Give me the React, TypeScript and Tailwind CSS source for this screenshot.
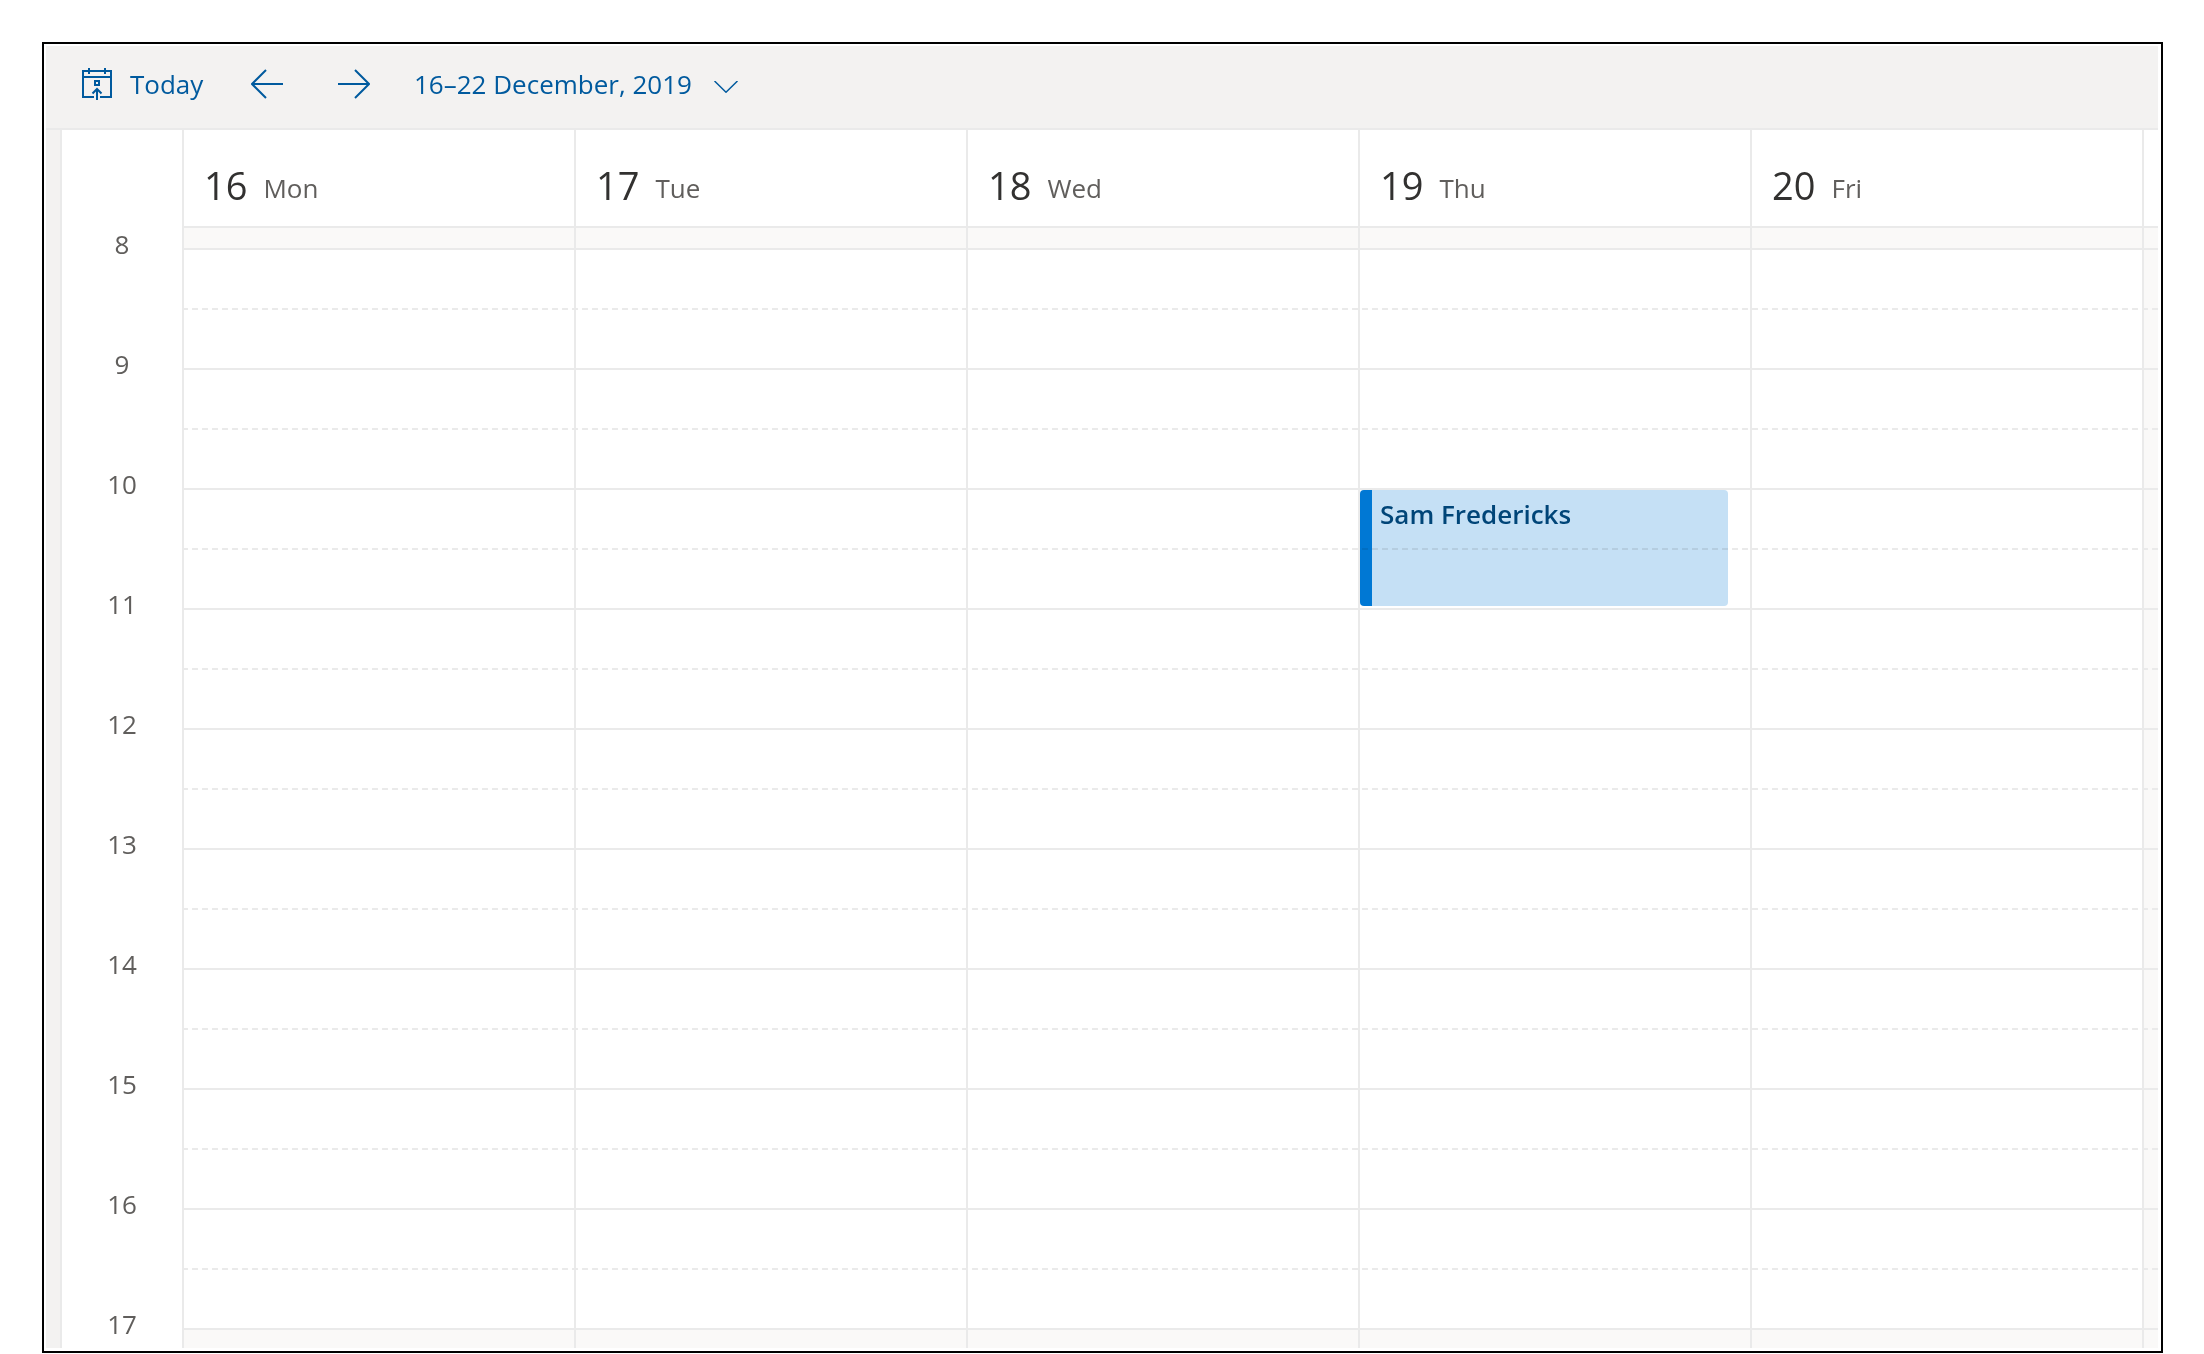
import type { ReactNode } from 'react';

const DAYS = [
  { date: 16, name: 'Mon' },
  { date: 17, name: 'Tue' },
  { date: 18, name: 'Wed' },
  { date: 19, name: 'Thu' },
  { date: 20, name: 'Fri' },
];

const HOURS = [8, 9, 10, 11, 12, 13, 14, 15, 16, 17];

// Five working days, then the sliver of the weekend that is still in view
const DAY_COLUMNS = 'grid grid-cols-[repeat(5,minmax(0,1fr))_16px]';

function TodayIcon() {
  return (
    <svg className="w-[30px] h-8 shrink-0" viewBox="0 0 30 32" fill="none" stroke="currentColor" strokeWidth={2} aria-hidden="true">
      <path d="M12 29H1V3h28v26H18" />
      <path d="M0 9h30M7 0v6M23 0v6" />
      <path d="M13 13h4v4h-4zM15 32V21M10.5 25.5L15 21l4.5 4.5" />
    </svg>
  );
}

function ArrowIcon({ flipped = false }: { flipped?: boolean }) {
  return (
    <svg className="w-8 h-8" viewBox="0 0 32 32" fill="none" stroke="currentColor" strokeWidth={2} aria-hidden="true">
      {flipped ? <path d="M0 16h31M17 2l14 14-14 14" /> : <path d="M32 16H1M15 2L1 16l14 14" />}
    </svg>
  );
}

function ToolbarButton({ label, className, children }: { label?: string; className?: string; children: ReactNode }) {
  return (
    <button type="button" aria-label={label} className={`flex items-center cursor-pointer hover:text-[#004578] ${className ?? ''}`}>
      {children}
    </button>
  );
}

function Toolbar() {
  return (
    <header className="flex items-center h-[84px] pl-9 pb-1.5 bg-[#f3f2f1] border-b-2 border-[#eaeaea] text-[#005a9e]">
      <ToolbarButton className="gap-[18px] w-[169px]">
        <TodayIcon />
        Today
      </ToolbarButton>
      <ToolbarButton label="Previous week">
        <ArrowIcon />
      </ToolbarButton>
      <ToolbarButton label="Next week" className="ml-[55px]">
        <ArrowIcon flipped />
      </ToolbarButton>
      <ToolbarButton className="ml-11 gap-[22px]">
        16–22 December, 2019
        <svg className="w-6 h-3 mt-1.5" viewBox="0 0 24 12" fill="none" stroke="currentColor" strokeWidth={1.5} aria-hidden="true">
          <path d="M.5 0L12 11.2 23.5 0" />
        </svg>
      </ToolbarButton>
    </header>
  );
}

function DayHeaders() {
  return (
    <div className={`${DAY_COLUMNS} h-[98px] border-b-2 border-[#eaeaea]`}>
      {DAYS.map((day) => (
        <div key={day.date} className="flex items-end gap-4 pl-5 pb-[11px] border-l-2 border-[#eaeaea]">
          <span className="text-[38px] leading-[60px] text-[#323130]">{day.date}</span>
          <span className="leading-[54px] text-[#605e5c]">{day.name}</span>
        </div>
      ))}
      <div className="border-l-2 border-[#eaeaea]" />
    </div>
  );
}

function TimeGrid() {
  return (
    <div className="grid overflow-hidden">
      {/* Day columns, shaded outside working hours */}
      <div className={`${DAY_COLUMNS} col-start-1 row-start-1 bg-[#faf9f8]`}>
        {DAYS.map((day) => (
          <div key={day.date} className="pt-5 pb-[18px] border-l-2 border-[#eaeaea]">
            <div className="h-full bg-white" />
          </div>
        ))}
        <div className="border-l-2 border-[#eaeaea]" />
      </div>

      {/* Hour and half-hour lines */}
      <div className="col-start-1 row-start-1 pt-5">
        {HOURS.slice(0, -1).map((hour) => (
          <div key={hour} className="h-[120px] border-t-2 border-[#eaeaea] pt-[58px]">
            <div className="h-0.5 bg-[repeating-linear-gradient(to_right,#eaeaea_0_6px,transparent_6px_10px)]" />
          </div>
        ))}
        <div className="h-5 border-t-2 border-[#eaeaea]" />
      </div>

      {/* Events */}
      <div className={`${DAY_COLUMNS} col-start-1 row-start-1 pt-[262px] items-start mix-blend-multiply`}>
        <button
          type="button"
          className="col-start-4 ml-0.5 mr-[22px] h-[116px] flex items-start pt-1.5 pl-2 border-l-12 border-[#0078d4] rounded-sm bg-[#c5e0f5] text-[#004578] font-semibold cursor-pointer"
        >
          Sam Fredericks
        </button>
      </div>
    </div>
  );
}

export default function App() {
  return (
    <div className="bg-white pt-[42px] pl-[42px] pr-[41px] font-['Segoe_UI','Open_Sans',sans-serif] text-[26px] leading-9">
      <div className="border-2 border-black pt-0.5 pl-0.5 pr-[3px] pb-[3px]">
        <Toolbar />
        <main className="flex">
          <div className="w-4 shrink-0 bg-[#f3f2f1] border-r-2 border-[#eaeaea]" />
          <div className="w-[120px] shrink-0 pt-[98px] text-center text-[#605e5c]">
            {HOURS.map((hour) => (
              <div key={hour} className="h-[120px] last:h-10 leading-8">
                {hour}
              </div>
            ))}
          </div>
          <div className="flex-1 min-w-0">
            <DayHeaders />
            <TimeGrid />
          </div>
        </main>
      </div>
    </div>
  );
}
